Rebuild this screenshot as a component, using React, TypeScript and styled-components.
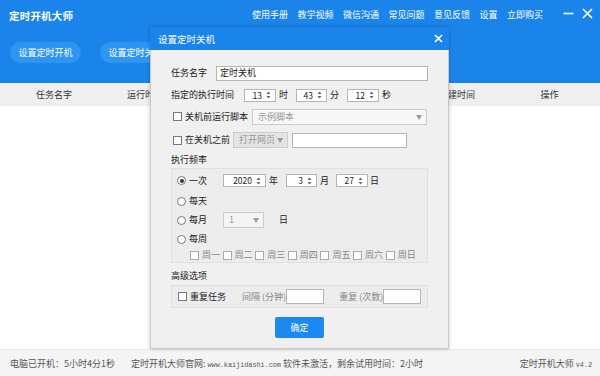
import React from "react";
import styled, { createGlobalStyle } from "styled-components";

const BLUE = "#1a84ea";

const Global = createGlobalStyle`
  html, body { margin: 0; padding: 0; }
  * { box-sizing: border-box; }
  body {
    font-family: "Noto Sans CJK SC", "Noto Sans", sans-serif;
    font-size: 9px;
    color: #222;
  }
  #root { width: 600px; height: 376px; overflow: hidden; }
`;

const Window = styled.div`
  position: relative;
  width: 600px;
  height: 376px;
  display: flex;
  flex-direction: column;
  background: #fff;
`;

const Header = styled.div`
  background: ${BLUE};
  height: 83px;
  color: #fff;
`;

const TopBar = styled.div`
  height: 30px;
  display: flex;
  align-items: center;
  padding: 0 7px 0 9px;
`;

const AppTitle = styled.div`
  font-size: 10.5px;
  font-weight: bold;
  letter-spacing: 0.2px;
`;

const Menu = styled.nav`
  margin-left: auto;
  display: flex;
  gap: 9.5px;
  font-size: 9px;
  margin-top: -2px;
`;

const WinButtons = styled.div`
  display: flex;
  align-items: center;
  gap: 8px;
  margin-left: 20px;
  margin-top: -4px;
`;

const ButtonRow = styled.div`
  display: flex;
  gap: 19px;
  padding: 12px 10px 0;
`;

const Pill = styled.div`
  width: 71px;
  height: 21px;
  border-radius: 11px;
  background: #2f95f2;
  display: flex;
  align-items: center;
  justify-content: center;
  font-size: 9px;
`;

const TableHead = styled.div`
  height: 23px;
  background: #efefef;
  display: grid;
  grid-template-columns: 108px 74px 117px 116px 84px 1fr;
  align-items: center;
  color: #333;
  font-size: 9px;
`;

const HeadCell = styled.div`
  text-align: center;
`;

const TableBody = styled.div`
  flex: 1;
  background: #fff;
`;

const Footer = styled.div`
  height: 27px;
  background: #f4f4f4;
  border-top: 1px solid #e8e8e8;
  display: flex;
  align-items: center;
  padding: 0 8px 0 10px;
  color: #555;
  font-size: 9px;
  gap: 16px;
`;

const Mono = styled.span`
  font-family: "Liberation Mono", monospace;
  font-size: 6.8px;
`;

const FooterRight = styled.span`
  margin-left: auto;
`;

/* dialog */

const Dialog = styled.div`
  position: absolute;
  left: 150px;
  top: 27px;
  width: 299px;
  height: 322px;
  background: #f0f0f0;
  border: 1px solid #c8c8c8;
  box-shadow: 0 0 4px rgba(0, 0, 0, 0.22);
  display: flex;
  flex-direction: column;
`;

const DialogBar = styled.div`
  height: 23px;
  background: ${BLUE};
  color: #fff;
  display: flex;
  align-items: center;
  padding: 0 6px 0 8px;
  font-size: 9.5px;
  margin: -1px -1px 0;
`;

const DialogBody = styled.div`
  padding: 13px 20px 0 20px;
  display: flex;
  flex-direction: column;
`;

const Row = styled.div<{ $h: number; $pl?: number }>`
  height: ${(p) => p.$h}px;
  display: flex;
  align-items: center;
  padding-left: ${(p) => p.$pl ?? 0}px;
`;

const Label = styled.span<{ $w?: number; $muted?: boolean }>`
  display: inline-block;
  width: ${(p) => (p.$w ? `${p.$w}px` : "auto")};
  flex-shrink: 0;
  color: ${(p) => (p.$muted ? "#888" : "#222")};
  white-space: nowrap;
  line-height: 12px;
`;

const TextInput = styled.div<{ $w?: number }>`
  height: 15px;
  background: #fff;
  border: 1px solid #b5b5b5;
  ${(p) => (p.$w ? `width: ${p.$w}px;` : "flex: 1;")}
  display: flex;
  align-items: center;
  padding-left: 3px;
  flex-shrink: 0;
  line-height: 12px;
`;

const Spin = styled.div<{ $w: number }>`
  width: ${(p) => p.$w}px;
  height: 13px;
  background: #fff;
  border: 1px solid #b5b5b5;
  display: flex;
  align-items: center;
  justify-content: flex-end;
  padding-right: 4px;
  gap: 4px;
  font-size: 8.5px;
  line-height: 11px;
  flex-shrink: 0;
`;

const Unit = styled.span<{ $ml?: number; $mr?: number }>`
  margin-left: ${(p) => p.$ml ?? 3}px;
  margin-right: ${(p) => p.$mr ?? 0}px;
  flex-shrink: 0;
  line-height: 12px;
`;

const Select = styled.div<{ $w: number; $bg?: string }>`
  width: ${(p) => p.$w}px;
  height: 16px;
  background: ${(p) => p.$bg ?? "#f7f7f7"};
  border: 1px solid #cdcdcd;
  color: #999;
  display: flex;
  align-items: center;
  padding: 0 4px 0 5px;
  flex-shrink: 0;
  line-height: 12px;
  span:last-child {
    margin-left: auto;
    font-size: 6px;
    color: #999;
  }
`;

const Box = styled.span<{ $round?: boolean; $muted?: boolean }>`
  width: 9px;
  height: 9px;
  background: #fff;
  border: 1px solid ${(p) => (p.$muted ? "#aaa" : "#777")};
  border-radius: ${(p) => (p.$round ? "50%" : "0")};
  margin-right: 3px;
  flex-shrink: 0;
  display: flex;
  align-items: center;
  justify-content: center;
`;

const Dot = styled.span`
  width: 4px;
  height: 4px;
  border-radius: 50%;
  background: #333;
`;

const Group = styled.div<{ $h: number }>`
  height: ${(p) => p.$h}px;
  border: 1px solid #e0e0e0;
  background: #ececec;
  display: flex;
  flex-direction: column;
  justify-content: center;
`;

const FreqGroup = styled(Group)`
  justify-content: flex-start;
  padding-top: 1px;
  margin-top: 2px;
`;

const Choice = styled.div`
  width: 46px;
  display: flex;
  align-items: center;
  flex-shrink: 0;
`;

const Weekdays = styled.div`
  display: flex;
  gap: 2.6px;
  color: #888;
`;

const Day = styled.span`
  display: flex;
  align-items: center;
`;

const OkButton = styled.div`
  align-self: center;
  margin-top: 9px;
  width: 49px;
  height: 21px;
  border-radius: 2px;
  background: #1b89f0;
  color: #fff;
  display: flex;
  align-items: center;
  justify-content: center;
  font-size: 9px;
`;

const Arrows = () => (
  <svg width="5" height="8" viewBox="0 0 5 8">
    <path d="M2.5 0.5 L4.5 3 H0.5 Z M2.5 7.5 L4.5 5 H0.5 Z" fill="#666" />
  </svg>
);

const SpinBox = ({ w, v }: { w: number; v: string }) => (
  <Spin $w={w}>
    <span>{v}</span>
    <Arrows />
  </Spin>
);

const Check = ({ text, muted }: { text: string; muted?: boolean }) => (
  <>
    <Box $muted={muted} />
    <Label $muted={muted}>{text}</Label>
  </>
);

const Radio = ({ text, on }: { text: string; on?: boolean }) => (
  <Choice>
    <Box $round>{on && <Dot />}</Box>
    <Label>{text}</Label>
  </Choice>
);

const menu = ["使用手册", "教学视频", "微信沟通", "常见问题", "意见反馈", "设置", "立即购买"];
const days = ["周一", "周二", "周三", "周四", "周五", "周六", "周日"];

export default function App() {
  return (
    <Window>
      <Global />
      <Header>
        <TopBar>
          <AppTitle>定时开机大师</AppTitle>
          <Menu>
            {menu.map((m) => (
              <span key={m}>{m}</span>
            ))}
          </Menu>
          <WinButtons>
            <svg width="11" height="11" viewBox="0 0 11 11">
              <path d="M0.5 5.5 H10.5" stroke="#fff" strokeWidth="1.6" />
            </svg>
            <svg width="11" height="11" viewBox="0 0 11 11">
              <path d="M1 1 L10 10 M10 1 L1 10" stroke="#fff" strokeWidth="1.6" />
            </svg>
          </WinButtons>
        </TopBar>
        <ButtonRow>
          <Pill>设置定时开机</Pill>
          <Pill>设置定时关机</Pill>
        </ButtonRow>
      </Header>
      {/* the middle columns sit behind the dialog, so they stay empty */}
      <TableHead>
        <HeadCell>任务名字</HeadCell>
        <HeadCell>运行时间</HeadCell>
        <HeadCell />
        <HeadCell />
        <HeadCell>创建时间</HeadCell>
        <HeadCell>操作</HeadCell>
      </TableHead>
      <TableBody />
      <Footer>
        <span>电脑已开机：5小时4分1秒</span>
        <span>
          定时开机大师官网: <Mono>www.kaijidashi.com</Mono> 软件未激活，剩余试用时间：2小时
        </span>
        <FooterRight>
          定时开机大师 <Mono>v4.2</Mono>
        </FooterRight>
      </Footer>

      <Dialog>
        <DialogBar>
          <span>设置定时关机</span>
          <svg style={{ marginLeft: "auto" }} width="9" height="9" viewBox="0 0 9 9">
            <path d="M1 1 L8 8 M8 1 L1 8" stroke="#fff" strokeWidth="1.7" />
          </svg>
        </DialogBar>
        <DialogBody>
          <Row $h={20}>
            <Label $w={45}>任务名字</Label>
            <TextInput>定时关机</TextInput>
          </Row>
          <Row $h={24}>
            <Label $w={73}>指定的执行时间</Label>
            <SpinBox w={32} v="13" />
            <Unit $mr={8}>时</Unit>
            <SpinBox w={31} v="43" />
            <Unit $mr={8}>分</Unit>
            <SpinBox w={32} v="12" />
            <Unit>秒</Unit>
          </Row>
          <Row $h={19} $pl={2}>
            <Box />
            <Label $w={67}>关机前运行脚本</Label>
            <Select $w={175}>
              <span>示例脚本</span>
              <span>▼</span>
            </Select>
          </Row>
          <Row $h={28} $pl={2}>
            <Box />
            <Label $w={48}>在关机之前</Label>
            <Select $w={55} $bg="#e4e4e4">
              <span>打开网页</span>
              <span>▼</span>
            </Select>
            <TextInput $w={115} style={{ marginLeft: 4 }} />
          </Row>
          <Row $h={12}>
            <Label>执行频率</Label>
          </Row>
          <FreqGroup $h={95}>
            <Row $h={21} $pl={5}>
              <Radio text="一次" on />
              <SpinBox w={43} v="2020" />
              <Unit $mr={8}>年</Unit>
              <SpinBox w={31} v="3" />
              <Unit $mr={7}>月</Unit>
              <SpinBox w={32} v="27" />
              <Unit $ml={2}>日</Unit>
            </Row>
            <Row $h={20} $pl={5}>
              <Radio text="每天" />
            </Row>
            <Row $h={18} $pl={5}>
              <Radio text="每月" />
              <Select $w={41} $bg="#f4f4f4">
                <span>1</span>
                <span>▼</span>
              </Select>
              <Unit $ml={15}>日</Unit>
            </Row>
            <Row $h={20} $pl={5}>
              <Radio text="每周" />
            </Row>
            <Row $h={12} $pl={18}>
              <Weekdays>
                {days.map((d) => (
                  <Day key={d}>
                    <Check text={d} muted />
                  </Day>
                ))}
              </Weekdays>
            </Row>
          </FreqGroup>
          <Row $h={18} style={{ marginTop: 4 }}>
            <Label>高级选项</Label>
          </Row>
          <Group $h={23}>
            <Row $h={21} $pl={6}>
              <Check text="重复任务" />
              <Label $muted style={{ marginLeft: 16 }}>
                间隔 (分钟)
              </Label>
              <TextInput $w={38} />
              <Label $muted style={{ marginLeft: 15 }}>
                重复 (次数)
              </Label>
              <TextInput $w={38} />
            </Row>
          </Group>
          <OkButton>确定</OkButton>
        </DialogBody>
      </Dialog>
    </Window>
  );
}
